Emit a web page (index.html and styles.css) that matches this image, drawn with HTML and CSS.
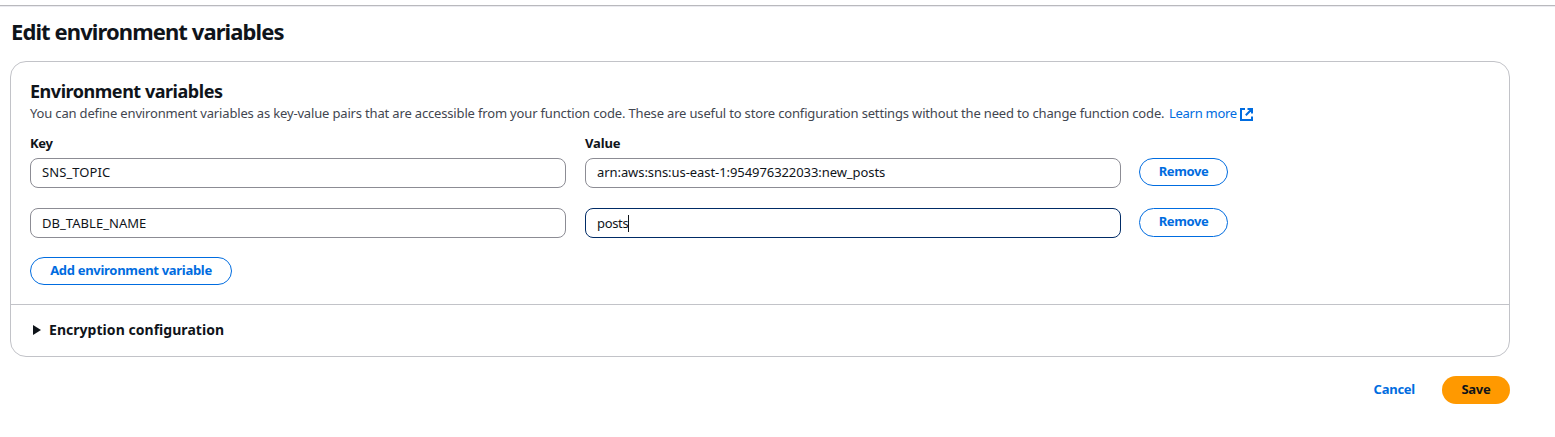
FILE: index.html
```html
<!DOCTYPE html>
<html lang="en">
<head>
<meta charset="utf-8">
<title>Edit environment variables</title>
<link rel="stylesheet" href="styles.css">
</head>
<body>
<div class="topline"></div>
<main class="page">
  <h1 class="title"><span>Edit environment variables</span></h1>
  <section class="card">
    <div class="card-main">
      <h2 class="heading"><span>Environment variables</span></h2>
      <p class="desc"><span class="desc-text">You can define environment variables as key-value pairs that are accessible from your function code. These are useful to store configuration settings without the need to change function code.</span><a class="learn"><span>Learn more</span><svg class="ext" viewBox="0 0 13 13"><path d="M5 1H1V12H12V8.5M7.5 1H12V5.5M12 1L5.8 7.2"/></svg></a></p>
      <div class="grid labels"><label class="key">Key</label><label class="value">Value</label></div>
      <div class="grid row">
        <div class="input"><span class="t-sns">SNS_TOPIC</span></div>
        <div class="input"><span class="t-arn">arn:aws:sns:us-east-1:954976322033:new_posts</span></div>
        <div class="button remove"><span>Remove</span></div>
      </div>
      <div class="grid row">
        <div class="input"><span class="t-db">DB_TABLE_NAME</span></div>
        <div class="input focused"><span class="t-posts">posts</span><i class="caret"></i></div>
        <div class="button remove tall"><span>Remove</span></div>
      </div>
      <div class="button add"><span>Add environment variable</span></div>
    </div>
    <div class="expand"><svg class="arrow" viewBox="0 0 8 10"><path d="M0 0L8 5L0 10Z"/></svg><span class="enc">Encryption configuration</span></div>
  </section>
  <footer class="actions"><a class="cancel"><span>Cancel</span></a><div class="save"><span>Save</span></div></footer>
</main>
</body>
</html>
```
FILE: styles.css
```css
* { box-sizing: border-box; }
body { margin: 0; background: #fff; color: #0f141a; font: 13px/20px "Noto Sans", "Open Sans", sans-serif; white-space: nowrap; overflow: hidden; }
h1, h2, p { margin: 0; }
.topline { height: 7px; border-bottom: 1px solid #ebebf0; box-shadow: inset 0 -1px #b9b9bd; }
.page { width: 1510px; padding-left: 10px; }
.title { height: 54px; padding: 10px 0 0 1px; font-size: 22px; line-height: 28px; font-weight: 700; letter-spacing: -0.91px; }
.card { height: 296px; border: 1px solid #c2c3c8; border-radius: 16px; }
.card-main { height: 243px; padding: 17px 19px 0; border-bottom: 1px solid #c2c3c8; }
.heading { height: 24px; font-size: 18px; line-height: 24px; font-weight: 700; letter-spacing: -0.47px; }
.desc { display: flex; height: 20px; color: #424650; letter-spacing: -0.165px; }
.desc-text { width: 1139px; }
.learn { display: flex; align-items: center; gap: 4px; color: #006ce0; letter-spacing: -0.28px; }
.learn > span { width: 67px; }
.ext { width: 13px; height: 13px; fill: none; stroke: #006ce0; stroke-width: 2; margin-top: 3px; }
.grid { display: grid; grid-template-columns: 536px 536px 89px; column-gap: 19px; align-items: start; }
.labels { height: 35px; padding-top: 10px; font-weight: 700; letter-spacing: -0.3px; }
.value { letter-spacing: -0.15px; }
.row { height: 50px; }
.input { display: flex; align-items: center; height: 30px; border: 1px solid #8c8c94; border-radius: 8px; padding: 0 11px; }
.t-arn { margin-top: -2px; letter-spacing: -0.07px; }
.t-sns { margin-top: -2px; letter-spacing: 0.08px; }
.t-db { letter-spacing: 0.04px; }
.t-posts { letter-spacing: -0.35px; }
.focused { border-color: #002b66; }
.caret { width: 1px; height: 17px; background: #0f141a; }
.button { display: flex; justify-content: center; align-items: center; height: 28px; padding-bottom: 2px; border: 1px solid #006ce0; border-radius: 15px; color: #006ce0; font-weight: 700; letter-spacing: -0.3px; }
.remove { margin-left: -1px; width: 89px; }
.remove > span { letter-spacing: -0.4px; }
.tall { height: 29px; padding-bottom: 3px; }
.add { width: 202px; margin-top: -1px; }
.expand { display: flex; align-items: center; height: 51px; padding: 0 0 1px 22px; gap: 8px; font-size: 14px; font-weight: 700; letter-spacing: 0.04px; }
.arrow { width: 8px; height: 10px; fill: #0f141a; }
.actions { display: flex; justify-content: flex-end; align-items: center; margin-top: 19px; gap: 27px; font-weight: 700; letter-spacing: -0.25px; }
.cancel { color: #006ce0; padding-bottom: 3px; }
.save { display: flex; justify-content: center; align-items: center; width: 68px; height: 28px; padding-bottom: 3px; border-radius: 14px; background: #ff9900; }
```
